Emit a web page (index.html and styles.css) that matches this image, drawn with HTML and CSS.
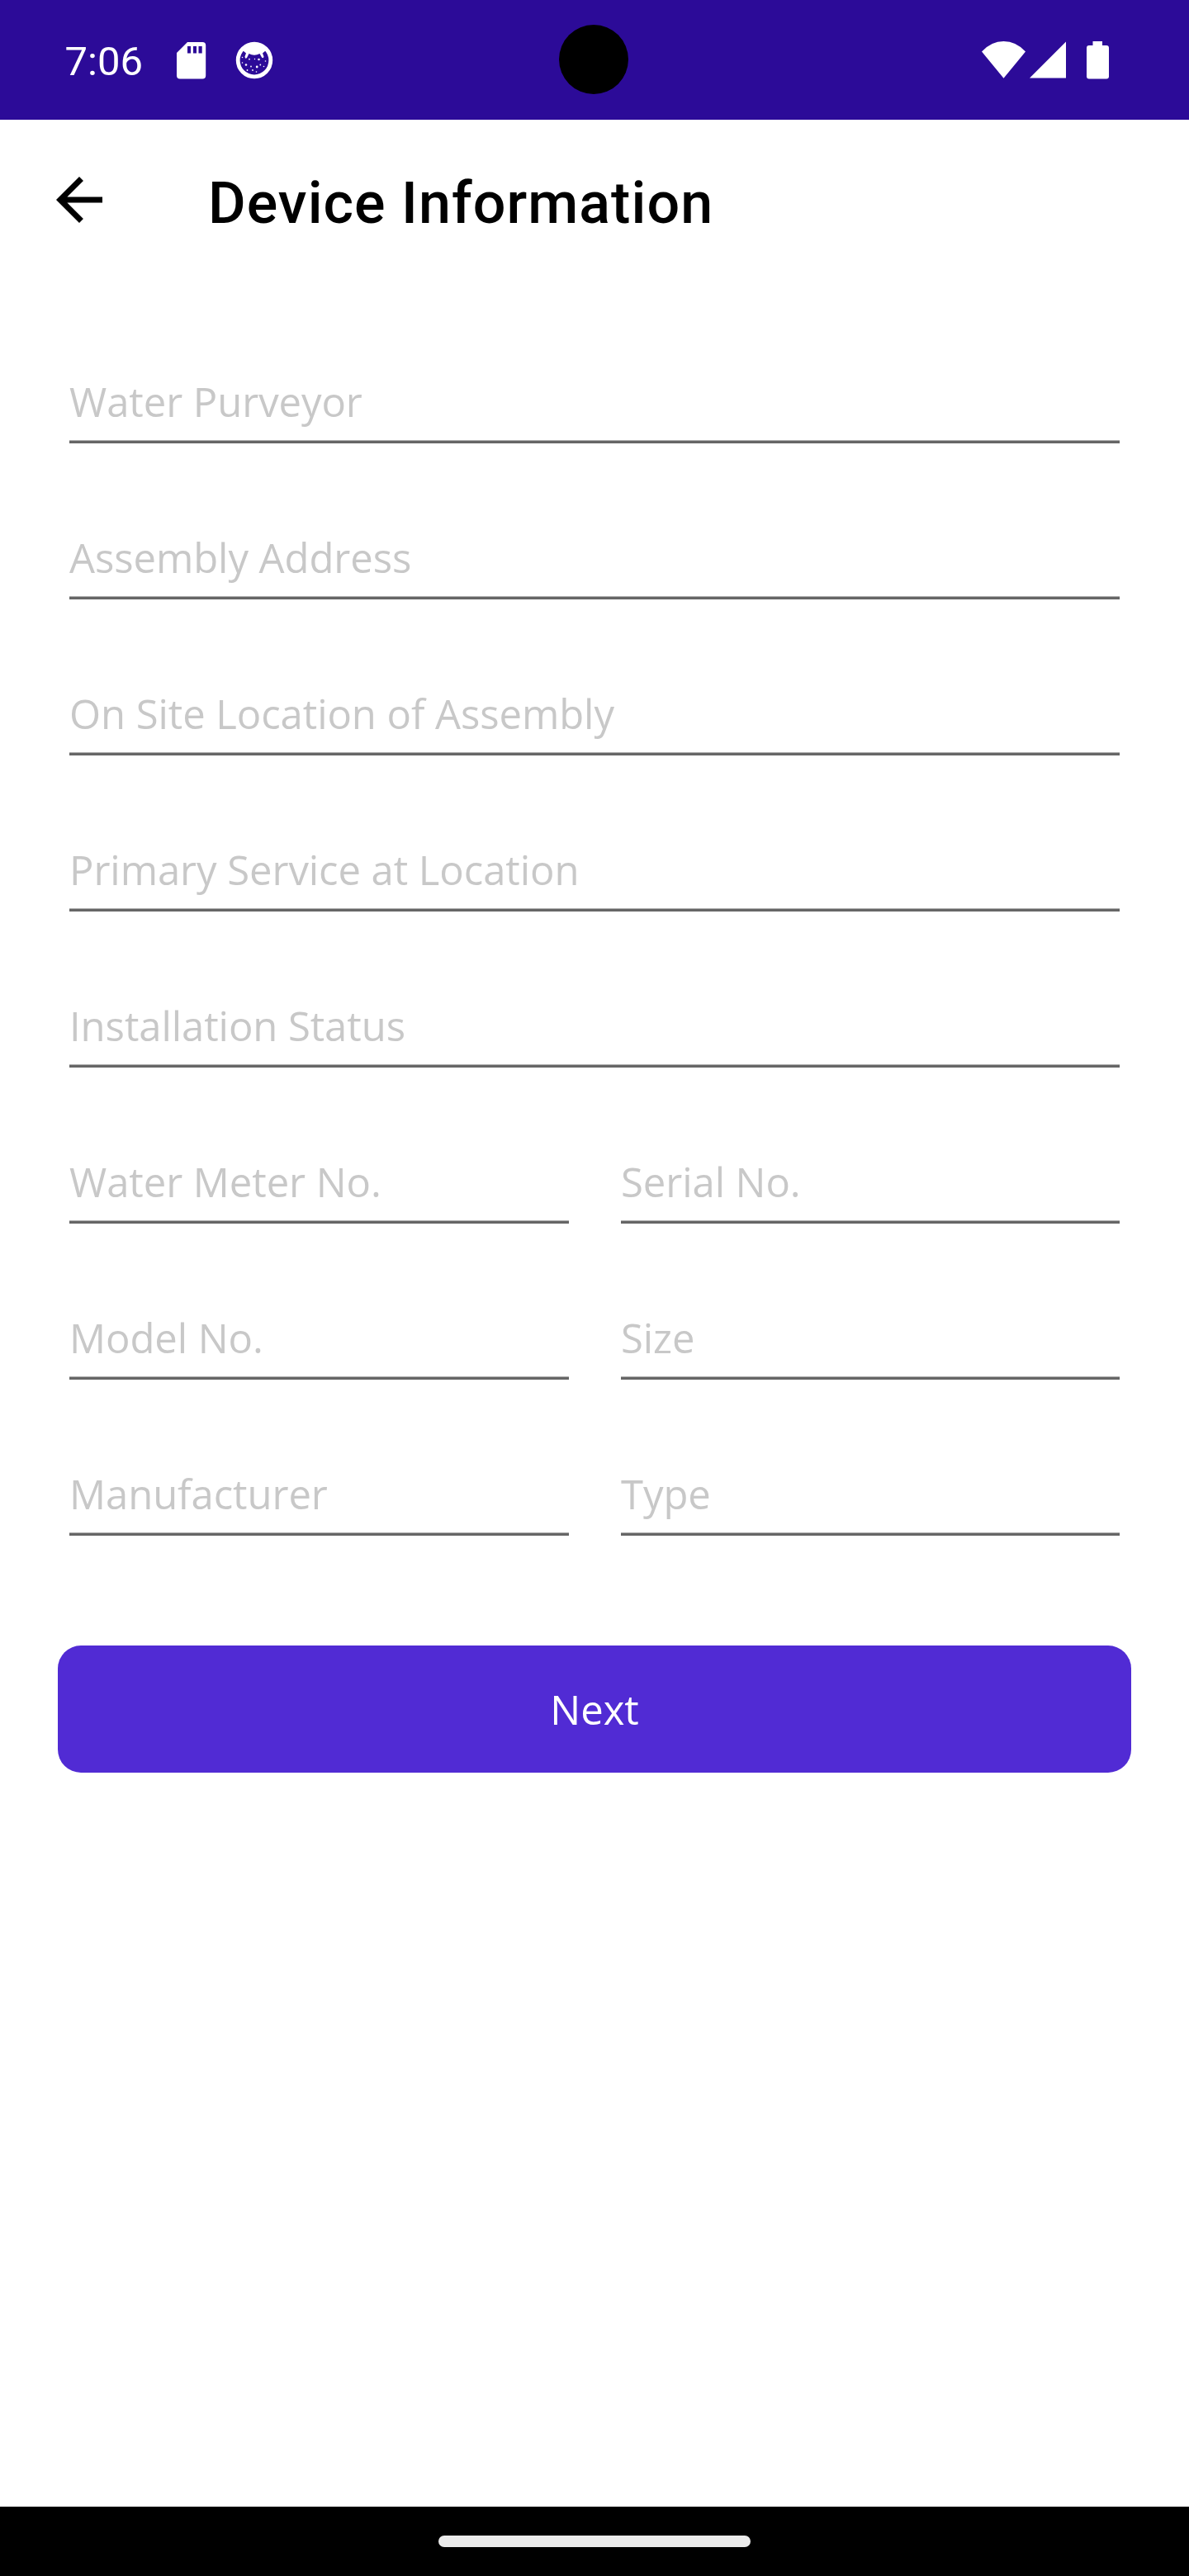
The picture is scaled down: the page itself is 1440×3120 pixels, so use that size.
FILE: index.html
```html
<!DOCTYPE html>
<html lang="en">
<head>
<meta charset="utf-8">
<title>Device Information</title>
<link rel="stylesheet" href="styles.css">
</head>
<body>
<div class="screen">
  <header class="status-bar">
    <span class="clock">7:06</span>
    <svg class="icon-sd" width="36" height="45" viewBox="0 0 36 45">
      <path fill="#fff" fill-rule="evenodd" d="M13 0H31.2Q35.2 0 35.2 4V40.5Q35.2 44.5 31.2 44.5H4Q0 44.5 0 40.5V13ZM13 5V13.5H17V5ZM20 5V13.5H24V5ZM26.5 5V13.5H30.7V5Z"/>
    </svg>
    <svg class="icon-face" width="46" height="46" viewBox="0 0 46 46">
      <circle cx="23" cy="23" r="19.8" fill="none" stroke="#fff" stroke-width="4.8"/>
      <path fill="#fff" d="M6 13Q12 3 23 3Q34 3 40 13L36.5 11.5L33 14.500L34.500 18.500Q34 21.500 32 19.500L29.500 15Q23 18.500 16.500 15L14 20Q12 22 11.500 18.500L13 14.500L9.500 11.500Z"/>
      <g fill="#fff">
        <circle cx="28.500" cy="22" r="1.3"/><circle cx="17" cy="21.700" r=".9"/><circle cx="23.500" cy="21.500" r=".7"/>
        <circle cx="13" cy="28.500" r="1.3"/><circle cx="19" cy="30.500" r=".9"/><circle cx="26.200" cy="31" r="1.4"/>
        <circle cx="30.300" cy="28.500" r=".9"/><circle cx="34.500" cy="30.500" r=".8"/><circle cx="36.500" cy="24" r=".8"/>
        <circle cx="8.500" cy="26" r=".8"/><circle cx="8.500" cy="19.500" r=".8"/><circle cx="14.500" cy="35" r=".9"/>
        <circle cx="21" cy="35" r=".9"/><circle cx="25.500" cy="37" r=".8"/>
      </g>
    </svg>
    <span class="camera"></span>
    <svg class="icon-wifi" width="54" height="46" viewBox="0 0 54 46">
      <path fill="#fff" d="M0 12.500Q11.500 0 26.500 0Q41.500 0 53 12.500L26.500 44.700Z"/>
    </svg>
    <svg class="icon-signal" width="45" height="46" viewBox="0 0 45 46">
      <path fill="#fff" d="M0 44.500 44 .5V44.500Z"/>
    </svg>
    <svg class="icon-battery" width="27" height="46" viewBox="0 0 27 46">
      <path fill="#fff" d="M7.500 0H19V5H24Q27 5 27 8V42.500Q27 45.500 24 45.500H3Q0 45.500 0 42.500V8Q0 5 3 5H7.500Z"/>
    </svg>
  </header>

  <div class="app-bar">
    <svg class="icon-back" width="84" height="84" viewBox="0 0 24 24">
      <path d="M20 11H7.830l5.590-5.590L12 4l-8 8 8 8 1.410-1.410L7.830 13H20v-2z"/>
    </svg>
    <h1 class="title">Device Information</h1>
  </div>

  <main class="form">
    <div class="field wide">Water Purveyor</div>
    <div class="field wide">Assembly Address</div>
    <div class="field wide">On Site Location of Assembly</div>
    <div class="field wide">Primary Service at Location</div>
    <div class="field wide">Installation Status</div>
    <div class="field">Water Meter No.</div>
    <div class="field">Serial No.</div>
    <div class="field">Model No.</div>
    <div class="field">Size</div>
    <div class="field">Manufacturer</div>
    <div class="field">Type</div>
  </main>

  <button class="next" type="button">Next</button>

  <footer class="nav-bar"><span class="handle"></span></footer>
</div>
</body>
</html>
```
FILE: styles.css
```css
* {
  box-sizing: border-box;
}

body {
  margin: 0;
  background: #fff;
  font-family: "Open Sans", sans-serif;
  font-size: 49px;
}

.screen {
  display: flex;
  flex-direction: column;
  width: 1440px;
  height: 3120px;
}

.status-bar {
  position: relative;
  display: flex;
  align-items: flex-start;
  height: 145px;
  padding: 50px 97.5px 0 78.5px;
  background: #2c0b98;
}

.clock {
  font-family: Roboto, sans-serif;
  line-height: 50px;
  color: #fff;
}

.icon-sd {
  margin: 1px 0 0 41px;
}

.icon-face {
  margin: 0 0 0 35.5px;
}

.camera {
  position: absolute;
  left: 677px;
  top: 30px;
  width: 84px;
  height: 84px;
  border-radius: 50%;
  background: #000;
}

.icon-wifi {
  margin-left: auto;
}

.icon-signal {
  margin-left: 4px;
}

.icon-battery {
  margin-left: 24px;
}

.app-bar {
  display: flex;
  align-items: center;
  height: 202px;
  padding-left: 54px;
}

.icon-back {
  margin-bottom: 9px;
}

.title {
  margin: 0 0 0 114px;
  font: 500 70px/84px Roboto, sans-serif;
  letter-spacing: 1.05px;
  color: #000;
}

.form {
  display: grid;
  grid-template-columns: 605px 604px;
  gap: 91px 63px;
  padding: 92px 84px 0;
}

.field {
  height: 98px;
  line-height: 94px;
  letter-spacing: -0.07px;
  color: #c8c8c8;
  background: linear-gradient(#adadad 1px, #666 1px) bottom / 100% 4px no-repeat;
}

.wide {
  grid-column: 1 / -1;
}

.next {
  height: 154px;
  margin: 133px 70px 0;
  padding: 0;
  border: 0;
  border-radius: 28px;
  font: inherit;
  color: #fff;
  background: #512bd4;
}

.nav-bar {
  display: flex;
  justify-content: center;
  height: 84px;
  margin-top: auto;
  padding-top: 35px;
  background: #000;
}

.handle {
  width: 378px;
  height: 14px;
  border-radius: 7px;
  background: #ebebeb;
}
```
